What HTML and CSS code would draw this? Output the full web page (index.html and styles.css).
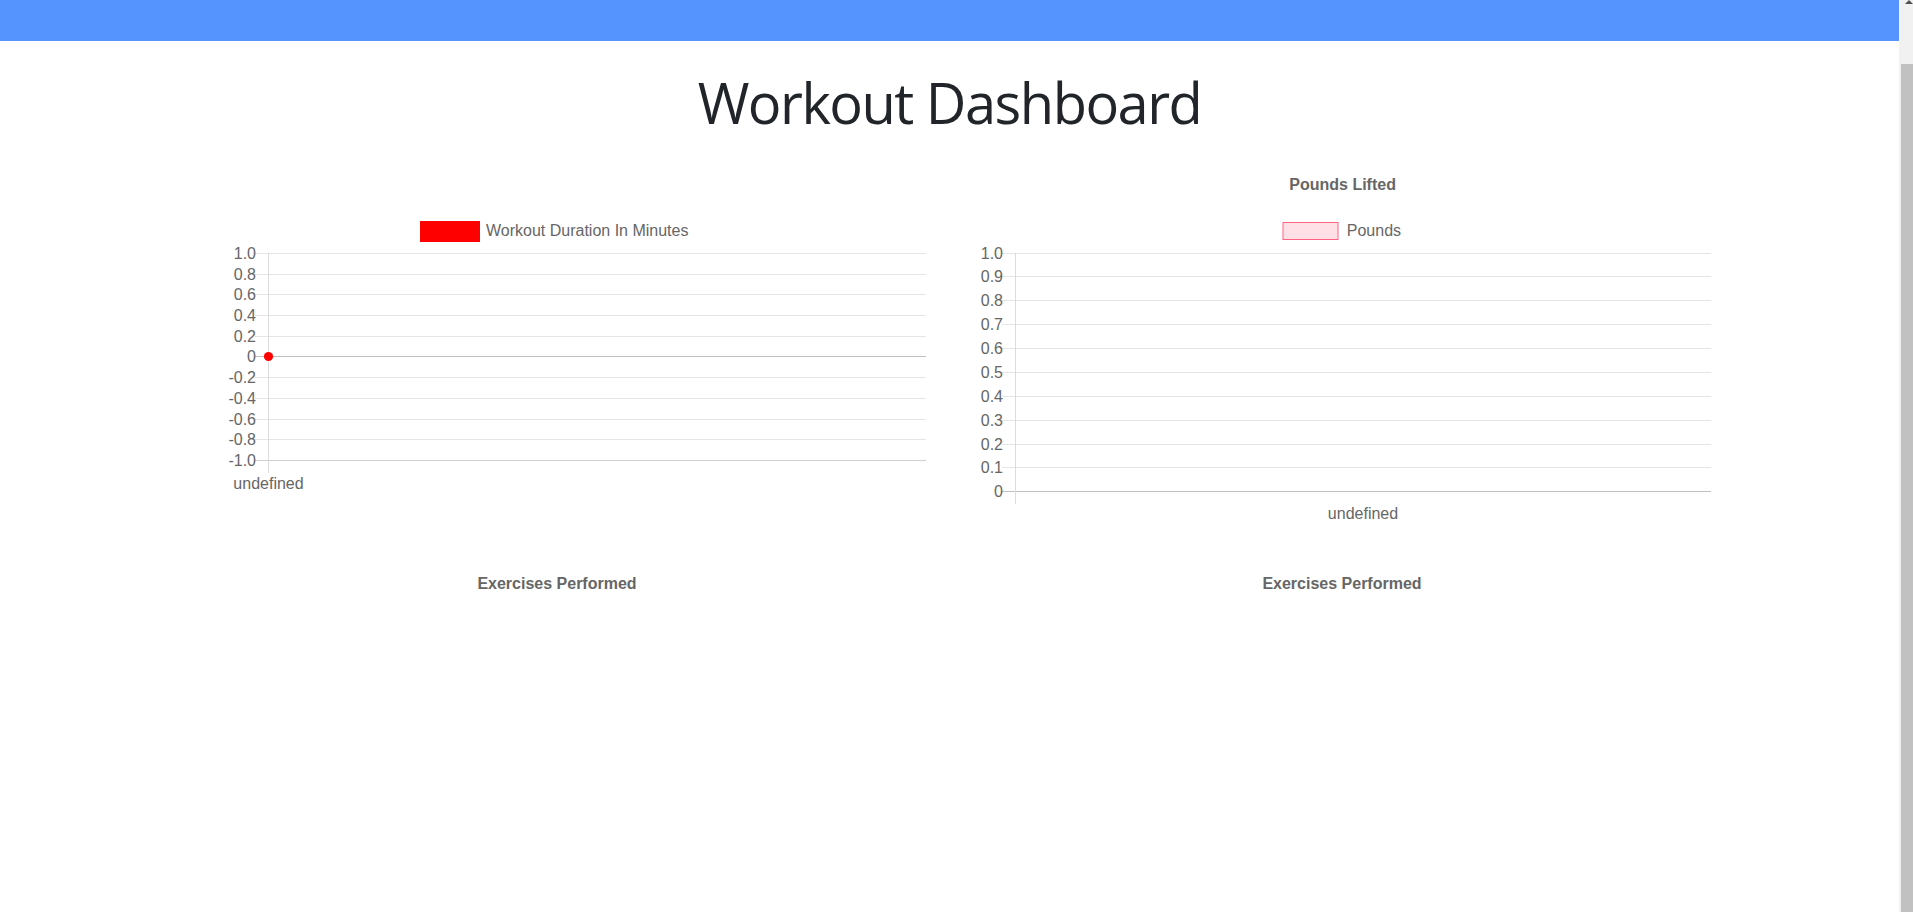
FILE: index.html
```html
<!DOCTYPE html>
<html lang="en">
<head>
<meta charset="utf-8">
<title>Workout Dashboard</title>
<link rel="stylesheet" href="styles.css">
</head>
<body>
<nav class="topbar"></nav>
<h1 class="page-title">Workout Dashboard</h1>
<main class="charts">
  <section class="chart">
    <svg class="chart-svg" width="785" height="390" viewBox="0 0 785 390">
      <rect x="255" y="81" width="60" height="21" fill="#ff0000"/>
      <text class="lbl" x="321" y="96">Workout Duration In Minutes</text>
      <g class="grid">
        <line x1="90" x2="761" y1="113.5" y2="113.5"/>
        <line x1="90" x2="761" y1="134.5" y2="134.5"/>
        <line x1="90" x2="761" y1="154.5" y2="154.5"/>
        <line x1="90" x2="761" y1="175.5" y2="175.5"/>
        <line x1="90" x2="761" y1="196.5" y2="196.5"/>
        <line x1="90" x2="761" y1="237.5" y2="237.5"/>
        <line x1="90" x2="761" y1="258.5" y2="258.5"/>
        <line x1="90" x2="761" y1="279.5" y2="279.5"/>
        <line x1="90" x2="761" y1="299.5" y2="299.5"/>
      </g>
      <line class="zero" x1="90" x2="761" y1="216.5" y2="216.5"/>
      <line class="base" x1="90" x2="761" y1="320.5" y2="320.5"/>
      <line class="axis" x1="103.5" x2="103.5" y1="113" y2="333"/>
      <g class="lbl end">
        <text x="91" y="118.5">1.0</text>
        <text x="91" y="139.5">0.8</text>
        <text x="91" y="159.5">0.6</text>
        <text x="91" y="180.5">0.4</text>
        <text x="91" y="201.5">0.2</text>
        <text x="91" y="221.5">0</text>
        <text x="91" y="242.5">-0.2</text>
        <text x="91" y="263.5">-0.4</text>
        <text x="91" y="284.5">-0.6</text>
        <text x="91" y="304.5">-0.8</text>
        <text x="91" y="325.5">-1.0</text>
      </g>
      <text class="lbl mid" x="103.5" y="349">undefined</text>
      <circle cx="103.5" cy="216.5" r="4.6" fill="#ff0000"/>
    </svg>
  </section>
  <section class="chart">
    <svg class="chart-svg" width="785" height="390" viewBox="0 0 785 390">
      <text class="lbl title mid" x="392.6" y="50">Pounds Lifted</text>
      <rect x="333" y="82.5" width="55" height="17" fill="rgba(255,99,132,0.2)" stroke="rgb(255,99,132)" stroke-width="1"/>
      <text class="lbl" x="396.8" y="96">Pounds</text>
      <g class="grid">
        <line x1="52" x2="761" y1="113.5" y2="113.5"/>
        <line x1="52" x2="761" y1="136.5" y2="136.5"/>
        <line x1="52" x2="761" y1="160.5" y2="160.5"/>
        <line x1="52" x2="761" y1="184.5" y2="184.5"/>
        <line x1="52" x2="761" y1="208.5" y2="208.5"/>
        <line x1="52" x2="761" y1="232.5" y2="232.5"/>
        <line x1="52" x2="761" y1="256.5" y2="256.5"/>
        <line x1="52" x2="761" y1="280.5" y2="280.5"/>
        <line x1="52" x2="761" y1="304.5" y2="304.5"/>
        <line x1="52" x2="761" y1="327.5" y2="327.5"/>
      </g>
      <line class="zero" x1="52" x2="761" y1="351.5" y2="351.5"/>
      <line class="axis" x1="65.5" x2="65.5" y1="113" y2="364"/>
      <g class="lbl end">
        <text x="53" y="118.5">1.0</text>
        <text x="53" y="141.5">0.9</text>
        <text x="53" y="165.5">0.8</text>
        <text x="53" y="189.5">0.7</text>
        <text x="53" y="213.5">0.6</text>
        <text x="53" y="237.5">0.5</text>
        <text x="53" y="261.5">0.4</text>
        <text x="53" y="285.5">0.3</text>
        <text x="53" y="309.5">0.2</text>
        <text x="53" y="332.5">0.1</text>
        <text x="53" y="356.5">0</text>
      </g>
      <text class="lbl mid" x="413" y="379">undefined</text>
    </svg>
  </section>
  <section class="chart chart-empty">
    <div class="chart-heading">Exercises Performed</div>
  </section>
  <section class="chart chart-empty">
    <div class="chart-heading">Exercises Performed</div>
  </section>
</main>
<div class="fake-scrollbar" aria-hidden="true">
  <div class="scroll-arrow"></div>
  <div class="scroll-thumb"></div>
</div>
<script src="script.js"></script>
</body>
</html>
```

FILE: styles.css
```css
html, body {
  margin: 0;
  padding: 0;
  background: #ffffff;
}

body {
  font-family: "Open Sans", "Noto Sans", sans-serif;
  color: #212529;
  padding-right: 14px;
}

.topbar {
  height: 95px;
  background: #5593ff;
}

.page-title {
  margin: 0;
  height: 99px;
  padding-top: 28px;
  box-sizing: border-box;
  font-family: "Open Sans", "Noto Sans", sans-serif;
  font-weight: 500;
  font-size: 56px;
  line-height: 67px;
  text-align: center;
  color: #212529;
  letter-spacing: -1.5px;
}

.charts {
  width: 1570px;
  margin: 0 auto;
  display: grid;
  grid-template-columns: 785px 785px;
}

.chart {
  height: 390px;
}

.chart-svg {
  display: block;
}

.chart-empty {
  height: 382px;
}

.chart-heading {
  width: 785px;
  padding-top: 46px;
  text-align: center;
  font: bold 16px/16px "Liberation Sans", Arial, sans-serif;
  color: #666666;
}

.lbl {
  font-family: "Liberation Sans", Arial, sans-serif;
  font-size: 16px;
  fill: #666666;
}

.title {
  font-weight: bold;
}

.end text, .end {
  text-anchor: end;
}

.mid {
  text-anchor: middle;
}

.grid line {
  stroke: #e5e5e5;
  stroke-width: 1;
}

.zero {
  stroke: #bfbfbf;
  stroke-width: 1;
}

.base {
  stroke: #cfcfcf;
  stroke-width: 1;
}

.axis {
  stroke: #dcdcdc;
  stroke-width: 1;
}

.fake-scrollbar {
  position: fixed;
  top: 0;
  right: 0;
  width: 14px;
  height: 100vh;
  background: #f1f1f1;
}

.scroll-arrow {
  position: absolute;
  top: 0;
  left: 6px;
  width: 0;
  height: 0;
  border-left: 4px solid transparent;
  border-right: 4px solid transparent;
  border-bottom: 4px solid #505050;
}

.scroll-thumb {
  position: absolute;
  top: 64px;
  left: 2px;
  right: 0;
  bottom: 0;
  background: #c1c1c1;
}
```

FILE: script.js
```js
window.scrollTo(0, document.documentElement.scrollHeight);
window.addEventListener('load', function () {
  window.scrollTo(0, document.documentElement.scrollHeight);
});
```
